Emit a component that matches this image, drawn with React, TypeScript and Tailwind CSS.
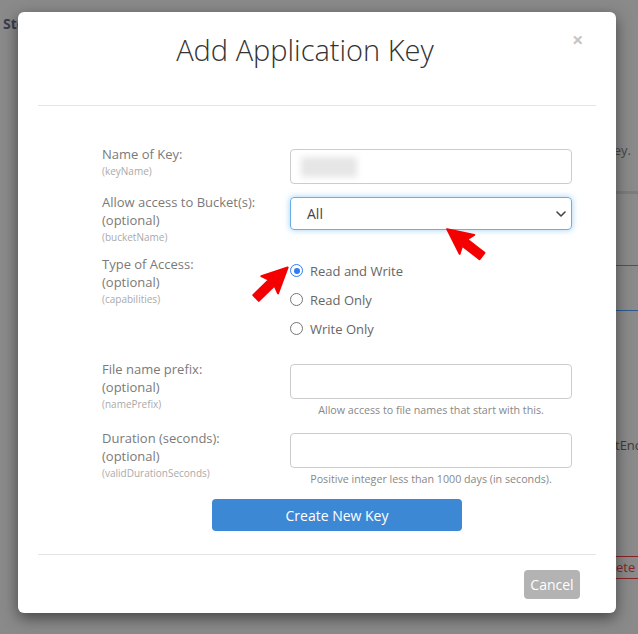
import React from "react"

// Add Application Key modal over a dimmed page
const Radio = ({ checked, label }: { checked?: boolean; label: string }) => (
  <label className="flex h-[29px] items-center gap-[7px]">
    {checked ? (
      <span className="flex h-[13px] w-[13px] items-center justify-center rounded-full border-[1.5px] border-[#2f7df6] bg-white">
        <span className="h-[6px] w-[6px] rounded-full bg-[#2f7df6]"></span>
      </span>
    ) : (
      <span className="h-[13px] w-[13px] rounded-full border border-[#767676] bg-white"></span>
    )}
    <span className="text-[13px] leading-[18px] text-[#666]">{label}</span>
  </label>
)

const FieldLabel = ({ lines, hint }: { lines: string[]; hint: string }) => (
  <div className="w-[188px] shrink-0">
    {lines.map((l) => (
      <div key={l} className="text-[13px] leading-[18px] text-[#7a7a7a]">
        {l}
      </div>
    ))}
    <div className="text-[10px] leading-[16px] text-[#aaa]">{hint}</div>
  </div>
)

const Arrow = ({ x, y, angle }: { x: number; y: number; angle: number }) => (
  <polygon
    points="0,-4 22,-4 19,-12 44,0 19,12 22,4 0,4"
    transform={`translate(${x} ${y}) rotate(${angle})`}
    fill="#f50000"
    stroke="#f50000"
    strokeWidth="2"
    strokeLinejoin="round"
  />
)

export default function App() {
  return (
    <div className="relative h-[634px] w-[638px] overflow-hidden bg-[#8a8a8a] font-['Open_Sans',sans-serif]">
      {/* page behind the overlay */}
      <div className="flex h-full">
        <div className="w-[596px] shrink-0 pl-[3px] pt-[14px]">
          <h1 className="text-[14px] font-bold leading-[20px] text-[#3b3b4a]">Storage Keys</h1>
        </div>
        <div className="flex min-w-0 flex-1 flex-col overflow-hidden">
          <div className="mt-[141px] whitespace-nowrap pr-[7px] text-right text-[13px] leading-[18px] text-[#474747]">
            key.
          </div>
          <div className="mt-[32px] h-[3px] bg-[#7c7c7c]"></div>
          <div className="mt-[71px] h-px bg-[#2d5b8f]"></div>
          <div className="mt-[44px] h-px bg-[#2d5b8f]"></div>
          <div className="mt-[125px] whitespace-nowrap pl-[19px] text-[13px] leading-[18px] text-[#3c3c3c]">
            tEnc
          </div>
          <div className="mt-[102px] flex h-[23px] items-center whitespace-nowrap border-y border-[#8a2424] text-[13px] text-[#8a2424]">
            Delete
          </div>
        </div>
      </div>

      {/* modal */}
      <div className="absolute left-[18px] top-[12px] flex w-[598px] flex-col rounded-[6px] bg-white shadow-[0_5px_15px_rgba(0,0,0,0.5)]">
        <div className="mx-[20px] flex h-[94px] items-start border-b border-[#e5e5e5] pt-[18px]">
          <h2 className="flex-1 text-center text-[29px] font-light leading-[40px] text-[#333]">
            Add Application Key
          </h2>
          <button className="w-[24px] text-left text-[20px] font-bold leading-[20px] text-[#c6c6c6]">
            ×
          </button>
        </div>

        <div className="pb-[23px] pl-[84px] pt-[39px]">
          <div className="flex">
            <FieldLabel lines={["Name of Key:"]} hint="(keyName)" />
            <div className="mt-[4px] w-[282px]">
              <div className="flex h-[35px] items-center rounded-[4px] border border-[#ccc] pl-[10px]">
                <div className="h-[20px] w-[56px] bg-[#e6e6e6] blur-[3px]"></div>
              </div>
            </div>
          </div>

          <div className="mt-[9px] flex">
            <FieldLabel lines={["Allow access to Bucket(s):", "(optional)"]} hint="(bucketName)" />
            <div className="mt-[4px] w-[282px]">
              <div className="flex h-[33px] items-center justify-between rounded-[4px] border border-[#66afe9] pl-[16px] pr-[5px] shadow-[0_0_6px_rgba(102,175,233,0.6)]">
                <span className="text-[14px] text-[#444]">All</span>
                <svg width="10" height="6" viewBox="0 0 10 6" fill="none">
                  <path d="M1 1l4 4 4-4" stroke="#444" strokeWidth="1.6" strokeLinecap="round" strokeLinejoin="round" />
                </svg>
              </div>
            </div>
          </div>

          <div className="mt-[10px] flex">
            <FieldLabel lines={["Type of Access:", "(optional)"]} hint="(capabilities)" />
            <div className="mt-[1px] w-[282px]">
              <Radio checked label="Read and Write" />
              <Radio label="Read Only" />
              <Radio label="Write Only" />
            </div>
          </div>

          <div className="mt-[17px] flex">
            <FieldLabel lines={["File name prefix:", "(optional)"]} hint="(namePrefix)" />
            <div className="mt-[4px] w-[282px]">
              <div className="h-[35px] rounded-[4px] border border-[#ccc]"></div>
              <p className="mt-[3px] text-center text-[10.7px] leading-[16px] text-[#888]">
                Allow access to file names that start with this.
              </p>
            </div>
          </div>

          <div className="mt-[11px] flex">
            <FieldLabel lines={["Duration (seconds):", "(optional)"]} hint="(validDurationSeconds)" />
            <div className="mt-[4px] w-[282px]">
              <div className="h-[35px] rounded-[4px] border border-[#ccc]"></div>
              <p className="mt-[3px] text-center text-[10.7px] leading-[16px] text-[#888]">
                Positive integer less than 1000 days (in seconds).
              </p>
            </div>
          </div>

          <div className="mt-[12px] flex w-[470px] justify-center">
            <button className="h-[32px] w-[250px] rounded-[4px] bg-[#3d88d5] text-[14px] text-white">
              Create New Key
            </button>
          </div>
        </div>

        <div className="mx-[20px] flex justify-end border-t border-[#e5e5e5] pb-[14px] pr-[16px] pt-[15px]">
          <button className="h-[29px] w-[56px] rounded-[4px] bg-[#b3b3b3] text-[14px] text-white">Cancel</button>
        </div>
      </div>

      {/* annotation arrows */}
      <svg className="pointer-events-none absolute left-0 top-0" width="638" height="634">
        <Arrow x={482} y={256} angle={217.6} />
        <Arrow x={256} y={298} angle={-44} />
      </svg>
    </div>
  )
}
